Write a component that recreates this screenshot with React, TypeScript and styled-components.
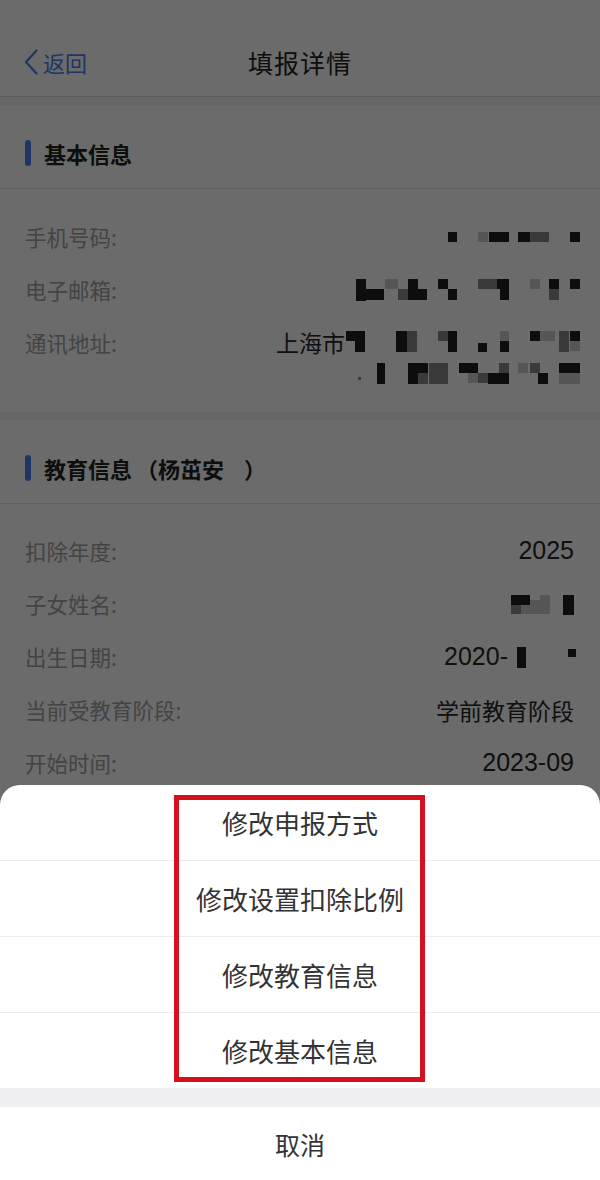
import * as React from 'react';
import styled, { createGlobalStyle } from 'styled-components';

const GlobalStyle = createGlobalStyle`
    html, body {
        margin: 0;
        padding: 0;
    }
    body {
        width: 600px;
        height: 1180px;
        overflow: hidden;
        background: #f4f4f6;
        font-family: "Noto Sans CJK SC", "Noto Sans", sans-serif;
    }
`;

const COLORS = {
    blue: '#4a80f0',
    title: '#222222',
    label: '#a2a2a2',
    value: '#262626',
    line: '#e3e3e3',
    sheetLine: '#ececec',
    sheetText: '#333333',
    band: '#efeff4',
    mark: '#d7101f',
};

const Screen = styled.div`
    position: relative;
    width: 600px;
    height: 1180px;
    overflow: hidden;
    background: #f4f4f6;
`;

const NavBar = styled.div`
    display: grid;
    grid-template-columns: 1fr auto 1fr;
    align-items: center;
    height: 68px;
    padding: 28px 24px 0;
    background: #fff;
    border-bottom: 1px solid #d9d9d9;
`;

const BackButton = styled.div`
    display: flex;
    align-items: center;
    gap: 5px;
    color: ${COLORS.blue};
    font-size: 22px;
`;

const NavTitle = styled.div`
    font-size: 25px;
    color: ${COLORS.title};
    letter-spacing: 1px;
`;

const Section = styled.div`
    margin-top: 8px;
    background: #fff;
`;

const SectionHeader = styled.div`
    display: flex;
    align-items: center;
    padding: 33px 24px 20px 25px;
    line-height: 30px;
    font-size: 22px;
    font-weight: 700;
    color: ${COLORS.title};
    border-bottom: 1px solid ${COLORS.line};
`;

const HeaderBar = styled.span`
    width: 6px;
    height: 26px;
    margin-right: 13px;
    border-radius: 3px;
    background: ${COLORS.blue};
`;

const Paren = styled.span<{ side: 'open' | 'close' }>`
    margin: ${({ side }) => (side === 'open' ? '0 0 0 4px' : '0 0 0 20px')};
`;

const Rows = styled.div<{ top: number }>`
    padding: ${({ top }) => top}px 26px 12px 25px;
`;

const Row = styled.div`
    display: flex;
    justify-content: space-between;
    align-items: flex-start;
    padding: 10px 0;
`;

const Label = styled.div`
    font-size: 21.5px;
    line-height: 33px;
    color: ${COLORS.label};
`;

const Value = styled.div`
    display: flex;
    flex-direction: column;
    align-items: flex-end;
    font-size: 23px;
    color: ${COLORS.value};
`;

const ValueLine = styled.div<{ lh?: number }>`
    display: flex;
    align-items: center;
    height: ${({ lh }) => lh ?? 33}px;
`;

const Num = styled.span`
    font-family: "Liberation Sans", "Noto Sans", sans-serif;
    font-size: 25px;
`;

const MosaicSvg = styled.svg<{ shift: number }>`
    display: block;
    margin-right: ${({ shift }) => -shift}px;
`;

const Overlay = styled.div`
    position: absolute;
    inset: 0;
    background: rgba(0, 0, 0, 0.58);
`;

const Sheet = styled.div`
    position: absolute;
    left: 0;
    right: 0;
    bottom: 0;
    background: #fff;
    border-radius: 20px 20px 0 0;
    overflow: hidden;
`;

const ActionItem = styled.div<{ last?: boolean }>`
    display: flex;
    align-items: center;
    justify-content: center;
    height: 75px;
    font-size: 26px;
    color: ${COLORS.sheetText};
    border-bottom: ${({ last }) => (last ? 'none' : `1px solid ${COLORS.sheetLine}`)};
`;

const Band = styled.div`
    height: 19px;
    background: ${COLORS.band};
`;

const CancelItem = styled.div`
    display: flex;
    align-items: center;
    justify-content: center;
    height: 73px;
    font-size: 25px;
    color: ${COLORS.sheetText};
`;

const Highlight = styled.div`
    position: absolute;
    left: 174px;
    top: 10px;
    width: 241px;
    height: 277px;
    border: 5px solid ${COLORS.mark};
    pointer-events: none;
`;

type Cell = [number, number, number, number, 'd' | 'm' | 'l'];

const SHADES = { d: '#202020', m: '#8a8a8a', l: '#cdcdcd' };

const Mosaic = ({ w, h, cells, shift = 0 }: { w: number; h: number; cells: Cell[]; shift?: number }) => (
    <MosaicSvg width={w} height={h} viewBox={`0 0 ${w} ${h}`} shift={shift}>
        {cells.map(([x, y, cw, ch, c], i) => (
            <rect key={i} x={x} y={y} width={cw} height={ch} fill={SHADES[c]} />
        ))}
    </MosaicSvg>
);

const phoneCells: Cell[] = [
    [1, 2, 9, 10, 'd'],
    [31, 2, 10, 10, 'l'],
    [42, 2, 20, 10, 'd'],
    [71, 2, 12, 10, 'd'],
    [83, 2, 19, 10, 'm'],
    [123, 2, 10, 10, 'd'],
];

const emailCells: Cell[] = [
    [1, 2, 10, 22, 'd'],
    [11, 12, 18, 11, 'd'],
    [30, 2, 13, 10, 'l'],
    [43, 12, 10, 11, 'm'],
    [53, 2, 10, 21, 'd'],
    [63, 12, 9, 11, 'd'],
    [83, 2, 10, 10, 'd'],
    [93, 12, 9, 11, 'd'],
    [123, 2, 19, 10, 'm'],
    [142, 2, 12, 10, 'd'],
    [145, 12, 9, 11, 'd'],
    [175, 2, 10, 10, 'l'],
    [194, 2, 10, 10, 'd'],
    [194, 12, 10, 11, 'm'],
    [215, 2, 10, 10, 'd'],
];

const addressCells1: Cell[] = [
    [1, 2, 19, 10, 'd'],
    [10, 12, 10, 11, 'd'],
    [51, 2, 11, 21, 'd'],
    [62, 2, 10, 21, 'm'],
    [93, 2, 10, 10, 'm'],
    [103, 2, 9, 21, 'd'],
    [133, 14, 9, 9, 'd'],
    [155, 2, 9, 10, 'l'],
    [155, 12, 9, 11, 'd'],
    [185, 2, 10, 10, 'd'],
    [195, 2, 15, 10, 'l'],
    [214, 2, 10, 21, 'm'],
    [225, 2, 10, 10, 'd'],
    [225, 12, 10, 10, 'l'],
];

const addressCells2: Cell[] = [
    [0, 16, 3, 3, 'm'],
    [19, 2, 8, 21, 'd'],
    [50, 2, 10, 21, 'd'],
    [60, 2, 10, 10, 'd'],
    [60, 12, 10, 11, 'm'],
    [71, 2, 19, 21, 'm'],
    [101, 2, 19, 10, 'd'],
    [110, 12, 10, 10, 'l'],
    [120, 12, 10, 10, 'm'],
    [130, 12, 21, 11, 'd'],
    [141, 2, 10, 10, 'm'],
    [160, 2, 10, 10, 'l'],
    [172, 2, 10, 10, 'm'],
    [180, 12, 10, 11, 'd'],
    [201, 2, 21, 10, 'd'],
    [201, 12, 21, 11, 'l'],
];

const childCells: Cell[] = [
    [1, 3, 19, 10, 'd'],
    [1, 13, 10, 9, 'm'],
    [11, 13, 9, 9, 'l'],
    [20, 8, 10, 14, 'l'],
    [30, 3, 10, 19, 'l'],
    [53, 3, 11, 20, 'd'],
];

const birthCells: Cell[] = [
    [9, 3, 9, 21, 'd'],
    [60, 5, 8, 8, 'd'],
];

const ChevronLeft = () => (
    <svg width="14" height="26" viewBox="0 0 14 26">
        <path d="M12.5 1.5 L2 13 L12.5 24.5" fill="none" stroke={COLORS.blue} strokeWidth="2.2" strokeLinecap="round" strokeLinejoin="round" />
    </svg>
);

const actions = ['修改申报方式', '修改设置扣除比例', '修改教育信息', '修改基本信息'];

const App = (): JSX.Element => {
    return (
        <Screen>
            <GlobalStyle />
            <NavBar>
                <BackButton>
                    <ChevronLeft />
                    返回
                </BackButton>
                <NavTitle>填报详情</NavTitle>
                <div />
            </NavBar>

            <Section>
                <SectionHeader>
                    <HeaderBar />
                    基本信息
                </SectionHeader>
                <Rows top={21}>
                    <Row>
                        <Label>手机号码:</Label>
                        <Value>
                            <ValueLine>
                                <Mosaic w={135} h={14} cells={phoneCells} shift={8} />
                            </ValueLine>
                        </Value>
                    </Row>
                    <Row>
                        <Label>电子邮箱:</Label>
                        <Value>
                            <ValueLine>
                                <Mosaic w={227} h={26} cells={emailCells} shift={8} />
                            </ValueLine>
                        </Value>
                    </Row>
                    <Row>
                        <Label>通讯地址:</Label>
                        <Value>
                            <ValueLine lh={32}>
                                上海市
                                <Mosaic w={237} h={26} cells={addressCells1} shift={8} />
                            </ValueLine>
                            <ValueLine lh={32}>
                                <Mosaic w={224} h={26} cells={addressCells2} shift={8} />
                            </ValueLine>
                        </Value>
                    </Row>
                </Rows>
            </Section>

            <Section>
                <SectionHeader>
                    <HeaderBar />
                    教育信息<Paren side="open">（</Paren>杨茁安<Paren side="close">）</Paren>
                </SectionHeader>
                <Rows top={20}>
                    <Row>
                        <Label>扣除年度:</Label>
                        <Value>
                            <ValueLine>
                                <Num>2025</Num>
                            </ValueLine>
                        </Value>
                    </Row>
                    <Row>
                        <Label>子女姓名:</Label>
                        <Value>
                            <ValueLine>
                                <Mosaic w={66} h={24} cells={childCells} shift={2} />
                            </ValueLine>
                        </Value>
                    </Row>
                    <Row>
                        <Label>出生日期:</Label>
                        <Value>
                            <ValueLine>
                                <Num>2020-</Num>
                                <Mosaic w={74} h={26} cells={birthCells} shift={8} />
                            </ValueLine>
                        </Value>
                    </Row>
                    <Row>
                        <Label>当前受教育阶段:</Label>
                        <Value>
                            <ValueLine>学前教育阶段</ValueLine>
                        </Value>
                    </Row>
                    <Row>
                        <Label>开始时间:</Label>
                        <Value>
                            <ValueLine>
                                <Num>2023-09</Num>
                            </ValueLine>
                        </Value>
                    </Row>
                </Rows>
            </Section>

            <Overlay />

            <Sheet>
                {actions.map((text, i) => (
                    <ActionItem key={text} last={i === actions.length - 1}>
                        {text}
                    </ActionItem>
                ))}
                <Band />
                <CancelItem>取消</CancelItem>
                <Highlight />
            </Sheet>
        </Screen>
    );
};

export default App;
